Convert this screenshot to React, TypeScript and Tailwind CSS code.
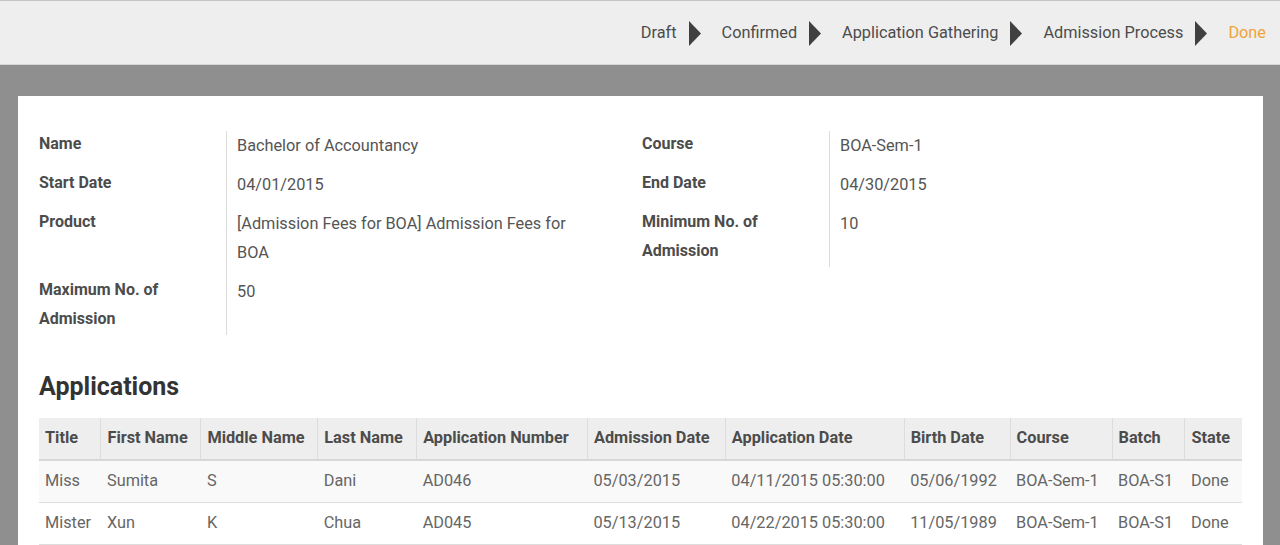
const steps = ['Draft', 'Confirmed', 'Application Gathering', 'Admission Process']

type Field = { label: string[]; value: string[] }

const leftFields: Field[] = [
  { label: ['Name'], value: ['Bachelor of Accountancy'] },
  { label: ['Start Date'], value: ['04/01/2015'] },
  { label: ['Product'], value: ['[Admission Fees for BOA] Admission Fees for', 'BOA'] },
  { label: ['Maximum No. of', 'Admission'], value: ['50'] },
]

const rightFields: Field[] = [
  { label: ['Course'], value: ['BOA-Sem-1'] },
  { label: ['End Date'], value: ['04/30/2015'] },
  { label: ['Minimum No. of', 'Admission'], value: ['10'] },
]

const columns = [
  { name: 'Title', w: 'w-[62px]' },
  { name: 'First Name', w: 'w-[100px]' },
  { name: 'Middle Name', w: 'w-[117px]' },
  { name: 'Last Name', w: 'w-[99px]' },
  { name: 'Application Number', w: 'w-[171px]' },
  { name: 'Admission Date', w: 'w-[138px]' },
  { name: 'Application Date', w: 'w-[179px]' },
  { name: 'Birth Date', w: 'w-[106px]' },
  { name: 'Course', w: 'w-[102px]' },
  { name: 'Batch', w: 'w-[73px]' },
  { name: 'State', w: 'w-[57px]' },
]

const rows = [
  ['Miss', 'Sumita', 'S', 'Dani', 'AD046', '05/03/2015', '04/11/2015 05:30:00', '05/06/1992', 'BOA-Sem-1', 'BOA-S1', 'Done'],
  ['Mister', 'Xun', 'K', 'Chua', 'AD045', '05/13/2015', '04/22/2015 05:30:00', '11/05/1989', 'BOA-Sem-1', 'BOA-S1', 'Done'],
]

function Arrow() {
  return (
    <svg width="12" height="25" viewBox="0 0 12 25" className="ml-[12px] mr-[21px]">
      <polygon points="0,0 12,12.5 0,25" fill="#404040" />
    </svg>
  )
}

function FieldGroup({ fields, lastPad, width }: { fields: Field[]; lastPad: string; width: string }) {
  return (
    <div className={width + ' flex flex-col'}>
      {fields.map((f, i) => (
        <div key={i} className="flex">
          <div className="w-[187px] pr-3 text-[16px] font-bold leading-[29px] text-[#4c4c4c]">
            {f.label.map((l) => (
              <div key={l} className="-mt-[2px] mb-[2px]">{l}</div>
            ))}
          </div>
          <div
            className={
              'flex-1 border-l border-[#dcdcdc] pl-[10px] text-[16.3px] leading-[29px] text-[#555] ' +
              (i === fields.length - 1 ? lastPad : 'pb-[10px]')
            }
          >
            {f.value.map((v) => (
              <div key={v}>{v}</div>
            ))}
          </div>
        </div>
      ))}
    </div>
  )
}

export default function App() {
  return (
    <div className="min-h-[545px] bg-[#8f8f8f] font-['Roboto',sans-serif]">
      <div className="flex h-[65px] items-center justify-end border-t border-b border-t-[#c4c4c4] border-b-[#d6d6d6] bg-[#eeeeee] pt-[2px] pr-[14px] text-[16.3px] text-[#4c4c4c]">
        {steps.map((s) => (
          <div key={s} className="flex items-center">
            <span>{s}</span>
            <Arrow />
          </div>
        ))}
        <span className="text-[#f0a33a]">Done</span>
      </div>

      <div className="ml-[18px] mr-[17px] mt-[31px] bg-white px-[21px] pt-[35px]">
        <div className="flex">
          <FieldGroup fields={leftFields} lastPad="" width="w-[603px]" />
          <FieldGroup fields={rightFields} lastPad="pb-[9px]" width="flex-1" />
        </div>

        <h2 className="mt-[37px] text-[25px] font-bold leading-[30px] text-[#333]">Applications</h2>

        <table className="mt-[16px] w-full border-collapse text-left text-[16.3px]">
          <thead>
            <tr className="h-[42px] border-b-2 border-[#d8d8d8] bg-[#eeeeee]">
              {columns.map((c) => (
                <th
                  key={c.name}
                  className={c.w + ' border-l border-[#dddddd] px-[6px] font-bold text-[#4c4c4c] first:border-l-0'}
                >
                  {c.name}
                </th>
              ))}
            </tr>
          </thead>
          <tbody>
            {rows.map((r, i) => (
              <tr key={i} className={'h-[42px] border-b border-[#dddddd] ' + (i % 2 === 0 ? 'bg-[#f9f9f9]' : 'bg-white')}>
                {r.map((cell, j) => (
                  <td key={j} className="px-[6px] text-[#666]">
                    {cell}
                  </td>
                ))}
              </tr>
            ))}
          </tbody>
        </table>
      </div>
    </div>
  )
}
